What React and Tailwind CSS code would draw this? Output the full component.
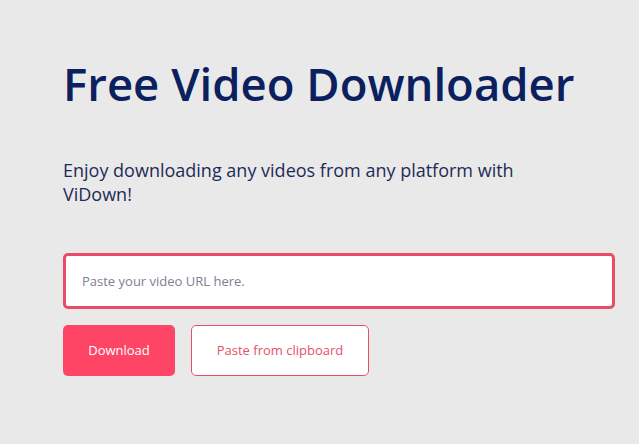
export default function App() {
  return (
    <div className="min-h-[444px] w-full bg-[#e9e9e9] pl-[63px] pr-[25px] pt-[51px]" style={{ fontFamily: '"Open Sans", "Noto Sans", sans-serif' }}>
      <h1 className="text-[45.5px] font-semibold leading-[64px] text-[#0b215f]">Free Video Downloader</h1>
      <p className="mt-[43px] text-[18px] leading-[24px] text-[#1e2b57] max-w-[480px]">
        Enjoy downloading any videos from any platform with ViDown!
      </p>
      <div className="mt-[47px]">
        <input
          type="text"
          placeholder="Paste your video URL here."
          className="h-[56px] w-[552px] rounded-[5px] border-[3px] border-[#e94c68] bg-white px-[16px] text-[13px] text-gray-700 placeholder:text-[#7b8190] outline-none"
        />
      </div>
      <div className="mt-[16px] flex gap-[16px]">
        <button className="h-[51px] w-[112px] rounded-[5px] bg-[#ff4566] text-[13px] text-white">Download</button>
        <button className="h-[51px] w-[178px] rounded-[5px] border border-[#e8506a] bg-white text-[13px] text-[#e8506a]">Paste from clipboard</button>
      </div>
    </div>
  );
}
